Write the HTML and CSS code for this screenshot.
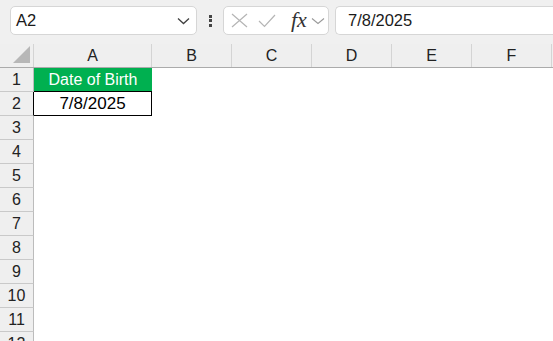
FILE: index.html
```html
<!DOCTYPE html>
<html>

<head>
  <meta charset='utf-8'>
  <title>Sheet - Date of Birth</title>
  <meta name='viewport' content='width=device-width, initial-scale=1'>
  <link rel="stylesheet" href="styles.css">
</head>

<body>
  <div class="toolbar">
    <div class="name-box">
      <span>A2</span>
      <svg class="chevron" width="13" height="8" viewBox="0 0 13 8">
        <path d="M1 1.5 L6.5 6.5 L12 1.5" fill="none" stroke="#404040" stroke-width="1.3" />
      </svg>
    </div>
    <div class="dots">
      <i></i><i></i><i></i>
    </div>
    <div class="func-box">
      <svg class="icon-x" width="17" height="15" viewBox="0 0 17 15">
        <path d="M1 1 L16 14 M16 1 L1 14" fill="none" stroke="#b5b5b5" stroke-width="1.2" />
      </svg>
      <svg class="icon-check" width="18" height="14" viewBox="0 0 18 14">
        <path d="M1 7 L6.5 12.5 L17 1" fill="none" stroke="#b5b5b5" stroke-width="1.2" />
      </svg>
      <span class="fx">fx</span>
      <svg class="chevron-sm" width="14" height="8" viewBox="0 0 14 8">
        <path d="M1 1.5 L7 6.5 L13 1.5" fill="none" stroke="#9a9a9a" stroke-width="1.1" />
      </svg>
    </div>
    <div class="formula-box">7/8/2025</div>
  </div>

  <div class="sheet">
    <div class="head">
      <div class="corner">
        <svg width="17" height="17" viewBox="0 0 17 17">
          <path d="M0 17 L17 17 L17 0 Z" fill="#b7b7b7" />
        </svg>
      </div>
      <div class="col-head col-a">A</div>
      <div class="col-head">B</div>
      <div class="col-head">C</div>
      <div class="col-head">D</div>
      <div class="col-head">E</div>
      <div class="col-head">F</div>
      <div class="col-head"></div>
    </div>

    <div class="row">
      <div class="rownum">1</div>
      <div class="cell col-a title">Date of Birth</div>
    </div>
    <div class="row">
      <div class="rownum boxed">2</div>
      <div class="cell col-a value">7/8/2025</div>
    </div>
    <div class="row"><div class="rownum">3</div></div>
    <div class="row"><div class="rownum">4</div></div>
    <div class="row"><div class="rownum">5</div></div>
    <div class="row"><div class="rownum">6</div></div>
    <div class="row"><div class="rownum">7</div></div>
    <div class="row"><div class="rownum">8</div></div>
    <div class="row"><div class="rownum">9</div></div>
    <div class="row"><div class="rownum">10</div></div>
    <div class="row"><div class="rownum">11</div></div>
    <div class="row"><div class="rownum">12</div></div>
  </div>
</body>

</html>
```

FILE: styles.css
```css
* {
  box-sizing: border-box;
  margin: 0;
  padding: 0;
  font-family: "Liberation Sans", Arial, sans-serif;
}

body {
  background-color: #fff;
  overflow: hidden;
  width: 553px;
  height: 341px;
}

/* formula bar */

.toolbar {
  display: flex;
  align-items: flex-start;
  height: 44px;
  padding-top: 6px;
  padding-left: 10px;
  background: #f0f0f0;
  overflow: hidden;
}

.toolbar > * {
  flex: none;
}

.name-box,
.func-box,
.formula-box {
  height: 29px;
  background: #fff;
  border: 1px solid #d6d6d6;
  border-radius: 5px;
  display: flex;
  align-items: center;
}

.name-box {
  width: 187px;
  padding: 0 6px 0 5px;
  justify-content: space-between;
  font-size: 16.5px;
  color: #1a1a1a;
}

.dots {
  width: 26px;
  height: 29px;
  display: flex;
  flex-direction: column;
  align-items: center;
  justify-content: center;
  gap: 1.5px;
}

.dots i {
  display: block;
  width: 3px;
  height: 3px;
  background: #454545;
}

.func-box {
  width: 106px;
  padding-left: 7px;
}

.icon-check {
  margin-left: 10px;
}

.fx {
  margin-left: 15px;
  font-family: "Liberation Serif", "Times New Roman", serif;
  font-style: italic;
  font-size: 22px;
  color: #333;
  line-height: 1;
  margin-top: -2px;
}

.chevron-sm {
  margin-left: 4px;
}

.formula-box {
  margin-left: 6px;
  width: 240px;
  padding-left: 12px;
  font-size: 16.5px;
  color: #1a1a1a;
  border-right: none;
  border-radius: 5px 0 0 5px;
}

/* grid */

.sheet {
  overflow: hidden;
}

.head {
  display: flex;
  height: 24px;
  background: #efefef;
  border-bottom: 1px solid #ababab;
}

.corner {
  width: 34px;
  flex: none;
  border-right: 1px solid #d4d4d4;
  display: flex;
  justify-content: flex-end;
  align-items: flex-end;
  padding: 0 3px 4px 0;
}

.corner svg {
  display: block;
}

.col-head {
  width: 80px;
  flex: none;
  border-right: 1px solid #d4d4d4;
  text-align: center;
  font-size: 16px;
  line-height: 23px;
  color: #222;
}

.col-a {
  width: 118px;
}

.row {
  display: flex;
  height: 24px;
}

.rownum {
  width: 34px;
  flex: none;
  background: #efefef;
  border-right: 1px solid #bcbcbc;
  border-bottom: 1px solid #c9c9c9;
  text-align: center;
  font-size: 16px;
  line-height: 23px;
  color: #222;
}

.rownum.boxed {
  border-right-color: #000;
}

.cell {
  flex: none;
  text-align: center;
  line-height: 23px;
}

.title {
  background: #00b050;
  color: #fff;
  font-size: 16px;
  border-bottom: 1px solid #000;
}

.value {
  width: 118px;
  color: #000;
  font-size: 17px;
  border-right: 1px solid #000;
  border-bottom: 1px solid #000;
}
```
